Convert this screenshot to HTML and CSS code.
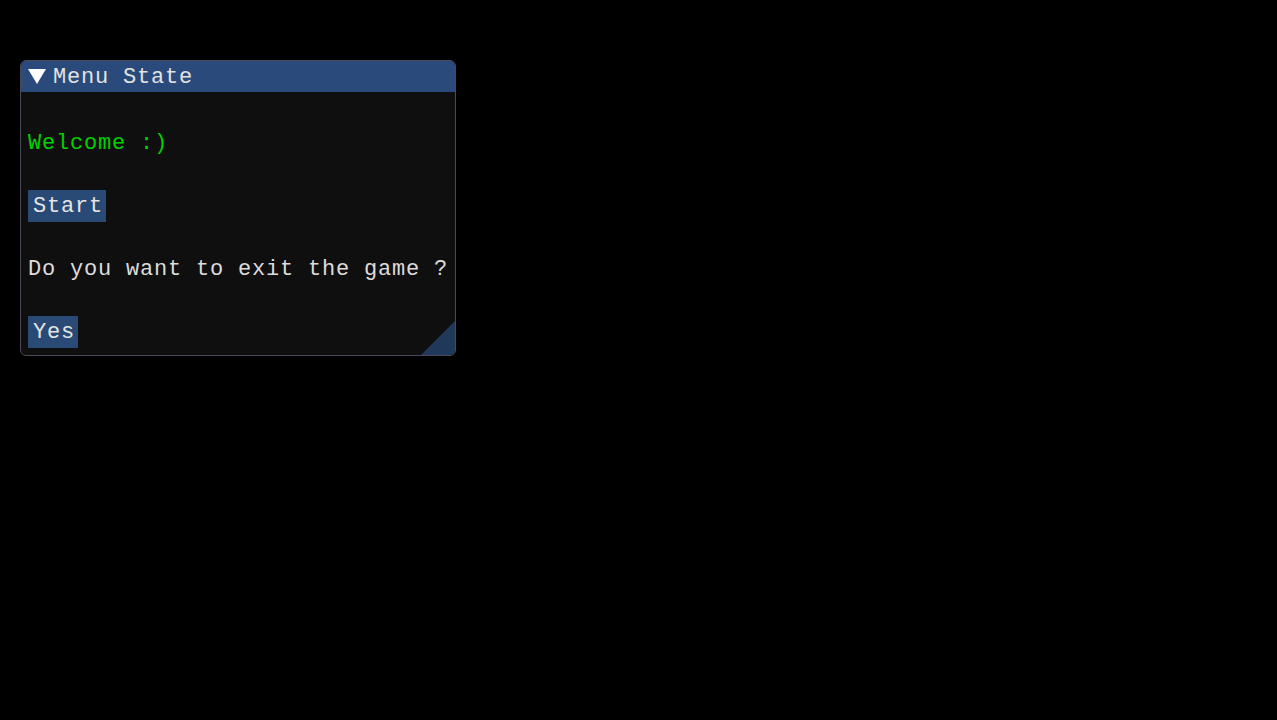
FILE: index.html
```html
<!DOCTYPE html>
<html>
<head>
<meta charset="utf-8">
<link rel="stylesheet" href="styles.css">
</head>
<body>
<div class="window">
  <div class="titlebar">
    <svg class="arrow" width="18" height="15" viewBox="0 0 18 15"><polygon points="0,0 18,0 9,15" fill="#ffffff"/></svg>
    <span class="title">Menu State</span>
  </div>
  <div class="content">
    <div class="line green">Welcome :)</div>
    <div class="row"><span class="btn btn-start">Start</span></div>
    <div class="line">Do you want to exit the game ?</div>
    <div class="row"><span class="btn btn-yes">Yes</span></div>
  </div>
  <div class="grip"></div>
</div>
</body>
</html>
```
FILE: styles.css
```css
html, body {
  margin: 0;
  padding: 0;
  background: #000000;
  height: 100%;
}
body {
  font-family: "Liberation Mono", "DejaVu Sans Mono", monospace;
  font-size: 22px;
  letter-spacing: 0.8px;
  color: #dcdcdc;
  overflow: hidden;
}
.window {
  position: relative;
  box-sizing: border-box;
  margin: 60px 0 0 20px;
  width: 436px;
  height: 296px;
  background: #0f0f0f;
  border: 1px solid #4a4a56;
  border-radius: 6px;
  overflow: hidden;
}
.titlebar {
  height: 31px;
  background: #294a7a;
  display: flex;
  align-items: center;
  padding-left: 7px;
  gap: 7px;
  color: #e2e2e2;
}
.title {
  line-height: 28px;
  height: 26px;
}
.arrow {
  display: block;
}
.content {
  display: flex;
  flex-direction: column;
  gap: 34px;
  padding: 38px 0 0 7px;
}
.line {
  height: 26px;
  line-height: 28px;
  white-space: nowrap;
}
.green {
  color: #00d000;
}
.row {
  display: flex;
}
.btn {
  display: block;
  box-sizing: border-box;
  background: #2a4a76;
  padding: 3px 0 3px 5px;
  height: 32px;
  line-height: 28px;
  color: #e4e4e4;
  overflow: hidden;
  white-space: nowrap;
}
.btn-start {
  width: 78px;
}
.btn-yes {
  width: 50px;
}
.grip {
  position: absolute;
  right: 0;
  bottom: 0;
  width: 34px;
  height: 34px;
  background: #20395a;
  clip-path: polygon(100% 0, 100% 100%, 0 100%);
}
```
